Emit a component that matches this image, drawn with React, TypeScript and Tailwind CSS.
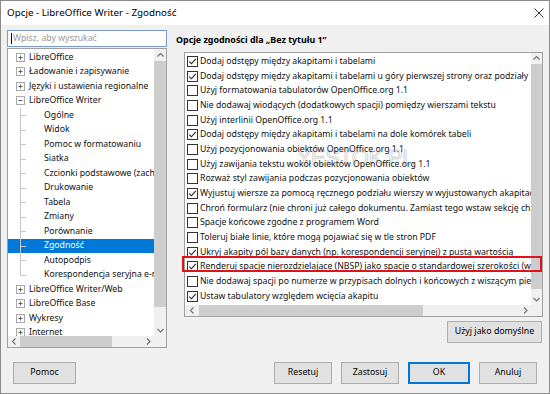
import React from 'react';

type TreeNode = { label: string; level: 0 | 1; open?: boolean; selected?: boolean; last?: boolean };

const treeNodes: TreeNode[] = [
  { label: 'LibreOffice', level: 0 },
  { label: 'Ładowanie i zapisywanie', level: 0 },
  { label: 'Języki i ustawienia regionalne', level: 0 },
  { label: 'LibreOffice Writer', level: 0, open: true },
  { label: 'Ogólne', level: 1 },
  { label: 'Widok', level: 1 },
  { label: 'Pomoc w formatowaniu', level: 1 },
  { label: 'Siatka', level: 1 },
  { label: 'Czcionki podstawowe (zachodnie)', level: 1 },
  { label: 'Drukowanie', level: 1 },
  { label: 'Tabela', level: 1 },
  { label: 'Zmiany', level: 1 },
  { label: 'Porównanie', level: 1 },
  { label: 'Zgodność', level: 1, selected: true },
  { label: 'Autopodpis', level: 1 },
  { label: 'Korespondencja seryjna e-mail', level: 1, last: true },
  { label: 'LibreOffice Writer/Web', level: 0 },
  { label: 'LibreOffice Base', level: 0 },
  { label: 'Wykresy', level: 0 },
  { label: 'Internet', level: 0 },
];

const options: [boolean, string][] = [
  [true, 'Dodaj odstępy między akapitami i tabelami'],
  [true, 'Dodaj odstępy między akapitami i tabelami u góry pierwszej strony oraz podziały'],
  [false, 'Użyj formatowania tabulatorów OpenOffice.org 1.1'],
  [false, 'Nie dodawaj wiodących (dodatkowych spacji) pomiędzy wierszami tekstu'],
  [false, 'Użyj interlinii OpenOffice.org 1.1'],
  [true, 'Dodaj odstępy między akapitami i tabelami na dole komórek tabeli'],
  [false, 'Użyj pozycjonowania obiektów OpenOffice.org 1.1'],
  [false, 'Użyj zawijania tekstu wokół obiektów OpenOffice.org 1.1'],
  [false, 'Rozważ styl zawijania podczas pozycjonowania obiektów'],
  [true, 'Wyjustuj wiersze za pomocą ręcznego podziału wierszy w wyjustowanych akapitach'],
  [false, 'Chroń formularz (nie chroni już całego dokumentu. Zamiast tego wstaw sekcję chronioną)'],
  [false, 'Spacje końcowe zgodne z programem Word'],
  [false, 'Toleruj białe linie, które mogą pojawiać się w tle stron PDF'],
  [true, 'Ukryj akapity pól bazy danych (np. korespondencji seryjnej) z pustą wartością'],
  [true, 'Renderuj spacje nierozdzielające (NBSP) jako spacje o standardowej szerokości (wyłączone)'],
  [false, 'Nie dodawaj spacji po numerze w przypisach dolnych i końcowych z wiszącym pierwszym wierszem'],
  [true, 'Ustaw tabulatory względem wcięcia akapitu'],
  [false, 'Pozwól tabelom przenosić się na marginesy'],
];

function Chevron({ dir }: { dir: 'up' | 'down' | 'left' | 'right' }) {
  const d = {
    up: 'M1.5 5.5 L4.5 2.5 L7.5 5.5',
    down: 'M1.5 3 L4.5 6 L7.5 3',
    left: 'M5.5 1.5 L2.5 4.5 L5.5 7.5',
    right: 'M3 1.5 L6 4.5 L3 7.5',
  }[dir];
  return (
    <svg width="9" height="9" viewBox="0 0 9 9">
      <path d={d} fill="none" stroke="#707070" strokeWidth="1.1" />
    </svg>
  );
}

function Expander({ open }: { open?: boolean }) {
  return (
    <svg width="9" height="9" viewBox="0 0 9 9" className="shrink-0">
      <rect x="0.5" y="0.5" width="8" height="8" fill="#fff" stroke="#a8a8a8" />
      <path d="M2.5 4.5 H6.5" stroke="#606060" />
      {!open && <path d="M4.5 2.5 V6.5" stroke="#606060" />}
    </svg>
  );
}

function Checkbox({ checked }: { checked: boolean }) {
  return (
    <svg width="11" height="11" viewBox="0 0 11 11" className="shrink-0">
      <rect x="0.5" y="0.5" width="10" height="10" fill="#fff" stroke="#333" />
      {checked && <path d="M2.3 5.6 L4.4 7.8 L8.8 2.8" fill="none" stroke="#222" strokeWidth="1.1" />}
    </svg>
  );
}

function Button({ label, focused, className = '' }: { label: string; focused?: boolean; className?: string }) {
  return (
    <button
      className={`h-[22px] bg-[#e1e1e1] text-[8.8px] text-black ${
        focused ? 'border-2 border-[#0078d7]' : 'border border-[#adadad]'
      } ${className}`}
    >
      {label}
    </button>
  );
}

export default function App() {
  return (
    <div className="w-[550px] h-[394px] flex flex-col overflow-hidden border border-[#8a8a8a] font-['Noto_Sans',sans-serif] text-[8.7px] text-[#111] relative">
      {/* Title bar */}
      <div className="h-[24px] bg-white flex items-center justify-between pl-[6px] pr-[5px] shrink-0">
        <span className="text-[9.8px] text-black">Opcje - LibreOffice Writer - Zgodność</span>
        <svg width="10" height="10" viewBox="0 0 10 10">
          <path d="M0.5 0.5 L9.5 9.5 M9.5 0.5 L0.5 9.5" stroke="#333" strokeWidth="1" />
        </svg>
      </div>

      {/* Body */}
      <div className="flex-1 bg-[#f0f0f0] flex flex-col">
        <div className="flex pt-[5px]">
          {/* Left column */}
          <div className="ml-[6px] w-[160px] flex flex-col shrink-0">
            <div className="h-[17px] bg-white border border-[#7a9cd3] flex items-center pl-[3px] text-[#999]">
              <span className="w-px h-[11px] bg-black mr-px" />
              Wpisz, aby wyszukać
            </div>
            <div className="mt-[1px] h-[300px] bg-white border border-[#a0a0a0] flex flex-col">
              <div className="flex flex-1 min-h-0">
                <div className="flex-1 min-w-0 overflow-hidden pt-[1px]">
                  {treeNodes.map((n, i) => (
                    <div
                      key={i}
                      className={`h-[14.5px] flex items-center whitespace-nowrap ${
                        n.selected ? 'bg-[#0078d7] text-white' : ''
                      }`}
                    >
                      {n.level === 0 ? (
                        <div className="flex items-center pl-[8px] gap-[4px]">
                          <Expander open={n.open} />
                          <span>{n.label}</span>
                        </div>
                      ) : (
                        <div className="flex items-center h-full">
                          <div className="relative w-[36px] h-full shrink-0">
                            <div
                              className={`absolute left-[12px] top-0 w-px bg-[#c8c8c8] ${n.last ? 'h-1/2' : 'h-full'}`}
                            />
                            <div className="absolute left-[12px] top-1/2 w-[6px] h-px bg-[#c8c8c8]" />
                          </div>
                          <span>{n.label}</span>
                        </div>
                      )}
                    </div>
                  ))}
                </div>
                {/* vertical scrollbar */}
                <div className="w-[12px] shrink-0 bg-[#f0f0f0] flex flex-col items-center">
                  <div className="h-[12px] flex items-center justify-center">
                    <Chevron dir="up" />
                  </div>
                  <div className="w-full h-[246px] bg-[#cdcdcd]" />
                  <div className="flex-1" />
                  <div className="h-[12px] flex items-center justify-center">
                    <Chevron dir="down" />
                  </div>
                </div>
              </div>
              {/* horizontal scrollbar */}
              <div className="h-[11px] shrink-0 bg-[#f0f0f0] flex items-center">
                <div className="w-[12px] flex justify-center">
                  <Chevron dir="left" />
                </div>
                <div className="w-[92px] h-full bg-[#cdcdcd]" />
                <div className="flex-1" />
                <div className="w-[12px] flex justify-center">
                  <Chevron dir="right" />
                </div>
                <div className="w-[12px]" />
              </div>
            </div>
          </div>

          {/* Right column */}
          <div className="ml-[9px] flex-1 min-w-0 flex flex-col pr-[6px]">
            <div className="h-[16px] mt-[2px] font-bold text-[8.9px] text-black flex items-center">
              Opcje zgodności dla „Bez tytułu 1”
            </div>
            <div className="ml-[8px] mt-[4px] h-[265px] bg-white border border-[#a0a0a0] flex flex-col relative">
              <div className="flex flex-1 min-h-0">
                <div className="flex-1 min-w-0 overflow-hidden pt-[1px]">
                  {options.map(([checked, label], i) => (
                    <div key={i} className="h-[14.7px] flex items-center gap-[2px] pl-[2px] whitespace-nowrap">
                      <Checkbox checked={checked} />
                      <span>{label}</span>
                    </div>
                  ))}
                </div>
                <div className="w-[11px] shrink-0 bg-[#f0f0f0] flex flex-col items-center">
                  <div className="h-[11px] flex items-center justify-center">
                    <Chevron dir="up" />
                  </div>
                  <div className="w-full h-[225px] bg-[#cdcdcd]" />
                  <div className="flex-1" />
                  <div className="h-[11px] flex items-center justify-center">
                    <Chevron dir="down" />
                  </div>
                </div>
              </div>
              <div className="h-[11px] shrink-0 bg-[#f0f0f0] flex items-center">
                <div className="w-[14px] flex justify-center">
                  <Chevron dir="left" />
                </div>
                <div className="w-[224px] h-full bg-[#cdcdcd]" />
                <div className="flex-1" />
                <div className="w-[12px] flex justify-center">
                  <Chevron dir="right" />
                </div>
                <div className="w-[11px]" />
              </div>
              {/* red highlight */}
              <div className="absolute left-[-3px] right-[0px] top-[203px] h-[16px] border-2 border-[#e0121c]" />
            </div>
            <div className="flex justify-end mt-[4px] pr-[1px]">
              <Button label="Użyj jako domyślne" className="w-[95px]" />
            </div>
          </div>
        </div>

        {/* Bottom buttons */}
        <div className="flex items-center mt-[14px] pl-[12px] pr-[12px]">
          <Button label="Pomoc" className="w-[63px]" />
          <div className="flex-1" />
          <div className="flex gap-[9px]">
            <Button label="Resetuj" className="w-[58px]" />
            <Button label="Zastosuj" className="w-[58px]" />
            <Button label="OK" focused className="w-[62px]" />
            <Button label="Anuluj" className="w-[58px]" />
          </div>
        </div>
      </div>

      {/* watermark */}
      <div className="absolute left-[296px] top-[140px] text-[22px] font-['Liberation_Sans',sans-serif] text-transparent [-webkit-text-stroke:1px_rgba(120,120,120,0.35)] tracking-tight pointer-events-none">
        YESTOK.PL
      </div>
    </div>
  );
}
